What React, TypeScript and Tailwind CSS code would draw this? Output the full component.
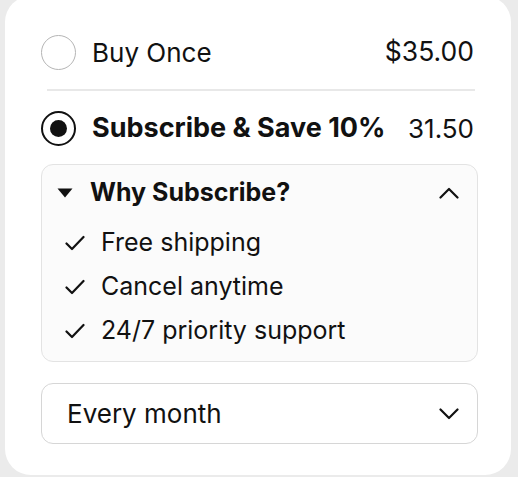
import { useState } from 'react';

const features = ['Free shipping', 'Cancel anytime', '24/7 priority support'];

function Radio({ checked }: { checked: boolean }) {
  if (checked) {
    return (
      <span className="w-[35px] h-[35px] rounded-full border-[2.5px] border-[#111] flex items-center justify-center shrink-0">
        <span className="w-[17px] h-[17px] rounded-full bg-[#111]" />
      </span>
    );
  }
  return <span className="w-[35px] h-[35px] rounded-full border-[1.5px] border-[#b5b5b5] shrink-0" />;
}

export default function App() {
  const [plan, setPlan] = useState<'once' | 'sub'>('sub');
  const [open, setOpen] = useState(true);

  return (
    <div className="w-[518px] h-[477px] bg-[#ebebeb] overflow-hidden font-['Inter',sans-serif] text-[#111]">
      <div className="-mt-1 ml-[5px] w-[506px] h-[479px] bg-white rounded-[26px] pt-[34px] pl-[36px] pr-[33px]">
        <button onClick={() => setPlan('once')} className="w-full h-[44px] flex items-center pr-[4px]">
          <Radio checked={plan === 'once'} />
          <span className="ml-[16px] text-[26px]">Buy Once</span>
          <span className="ml-auto text-[26.5px]">$35.00</span>
        </button>

        <div className="mt-[15px] ml-[6px] mr-[3px] h-[2px] bg-[#e8e8e8]" />

        <button onClick={() => setPlan('sub')} className="mt-[15px] w-full h-[44px] flex items-center pr-[4px]">
          <Radio checked={plan === 'sub'} />
          <span className="ml-[16px] text-[27px] font-bold">Subscribe &amp; Save 10%</span>
          <span className="ml-auto text-[26px]">31.50</span>
        </button>

        <div className="mt-[14px] h-[198px] rounded-[12px] border border-[#e3e3e3] bg-[#fbfbfb] pt-[10px] pl-[15px] pr-[18px]">
          <button onClick={() => setOpen(!open)} className="w-full h-[36px] flex items-center">
            <svg width="16" height="10" viewBox="0 0 16 10" className="shrink-0">
              <path d="M0.5 0.5 H15.5 L8 9.5 Z" fill="#111" />
            </svg>
            <span className="ml-[17px] text-[25px] font-bold">Why Subscribe?</span>
            <svg width="20" height="12" viewBox="0 0 20 12" className="ml-auto" fill="none" stroke="#111" strokeWidth="2.2" strokeLinecap="round" strokeLinejoin="round">
              <path d="M1.5 10.5 L10 2 L18.5 10.5" />
            </svg>
          </button>
          {open && (
            <ul className="mt-[10px]">
              {features.map(f => (
                <li key={f} className="h-[44px] flex items-center pl-[8px]">
                  <svg width="20" height="16" viewBox="0 0 20 16" fill="none" stroke="#111" strokeWidth="2.2" strokeLinecap="round" strokeLinejoin="round" className="shrink-0">
                    <path d="M1.5 8.5 L7 14 L18.5 2" />
                  </svg>
                  <span className="ml-[16px] text-[25px]">{f}</span>
                </li>
              ))}
            </ul>
          )}
        </div>

        <button className="mt-[21px] w-full h-[61px] rounded-[12px] border border-[#d6d6d6] bg-white flex items-center pl-[25px] pr-[18px]">
          <span className="text-[26px]">Every month</span>
          <svg width="20" height="12" viewBox="0 0 20 12" className="ml-auto" fill="none" stroke="#111" strokeWidth="2.2" strokeLinecap="round" strokeLinejoin="round">
            <path d="M1.5 1.5 L10 10 L18.5 1.5" />
          </svg>
        </button>
      </div>
    </div>
  );
}
